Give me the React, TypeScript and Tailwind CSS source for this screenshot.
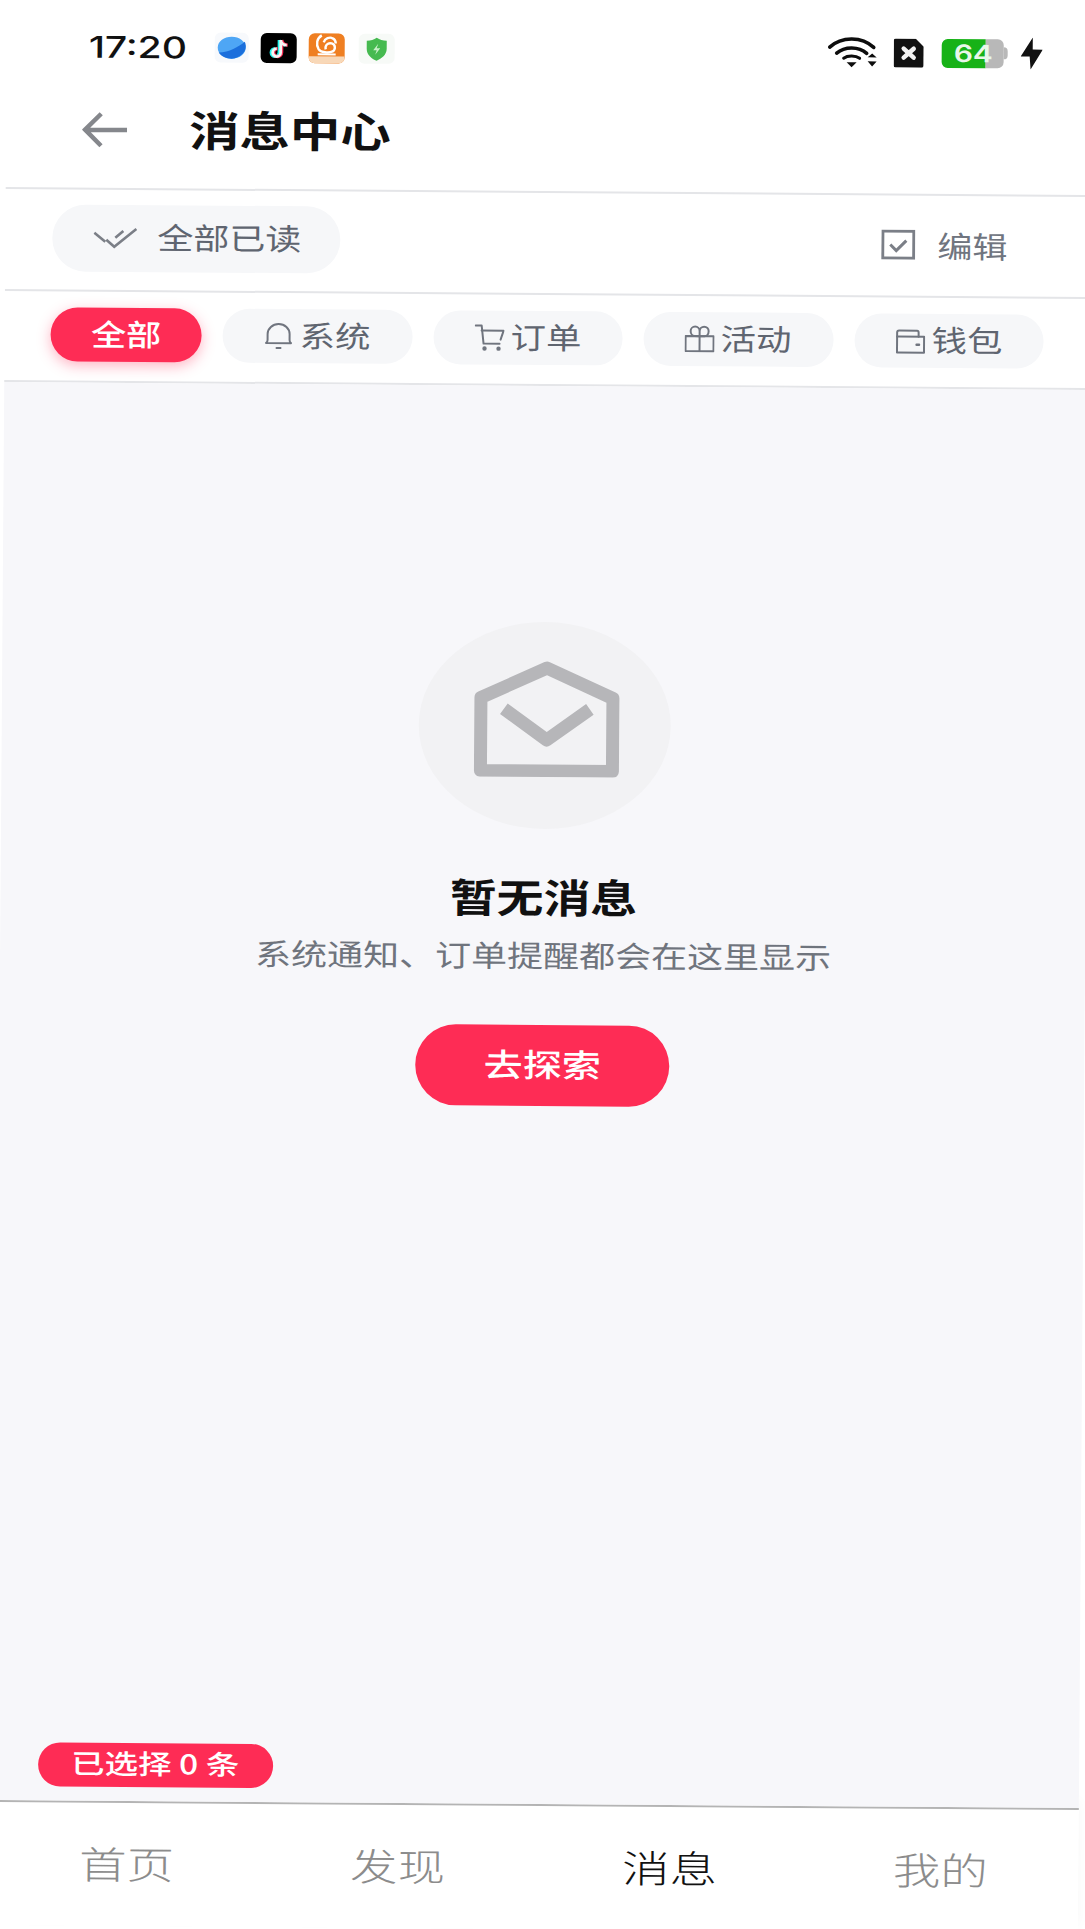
import React from 'react';

const tabs = [
  { key: 'system', label: '系统', icon: 'bell' },
  { key: 'order', label: '订单', icon: 'cart' },
  { key: 'event', label: '活动', icon: 'gift' },
  { key: 'wallet', label: '钱包', icon: 'wallet' },
];

const navItems = [
  { label: '首页', active: false },
  { label: '发现', active: false },
  { label: '消息', active: true },
  { label: '我的', active: false },
];

const TabIcon: React.FC<{ name: string }> = ({ name }) => {
  return (
    <svg width="30" height="28" viewBox="0 0 30 28" fill="none" stroke="#70757f" strokeWidth="2" strokeLinejoin="round" strokeLinecap="round">
      {name === 'bell' && (
        <>
          <path d="M2.500 21c1-.5 1.500-1.500 1.500-3v-6a11 10 0 0 1 22 0v6c0 1.500.5 2.500 1.500 3z" />
          <path d="M13 26h4" />
        </>
      )}
      {name === 'cart' && (
        <>
          <path d="M1 2h6l2 18h16" />
          <path d="M7 7h22l-3 9" />
          <circle cx="10" cy="25" r="1.200" fill="#70757f" />
          <circle cx="24" cy="25" r="1.200" fill="#70757f" />
        </>
      )}
      {name === 'gift' && (
        <>
          <path d="M1 11h28v15H1zM15 11v15" />
          <path d="M15 11V6a4.500 4.500 0 0 0-9 0c0 3 2 5 4 5zM15 11V6a4.500 4.500 0 0 1 9 0c0 3-2 5-4 5z" />
        </>
      )}
      {name === 'wallet' && (
        <>
          <path d="M1.500 10v16h27V10z" />
          <path d="M1.500 10V6c0-1 1-2 2-2h18c1 0 1.500 1 1.500 2v4" />
          <path d="M21 18h2.500" strokeWidth="2.400" />
        </>
      )}
    </svg>
  );
};

const StatusBar = () => (
  <div className="h-[100px] pl-[82px] pr-[49px] flex items-center">
    <span className="block w-[98px] font-['Inter'] text-[30px] font-medium text-[#111] origin-left scale-x-[1.3]">17:20</span>
    <div className="ml-[28px] flex items-center">
      {/* blue planet */}
      <svg width="34" height="30" viewBox="0 0 34 30" className="rounded-md bg-[#f7f9fc]">
        <ellipse cx="17" cy="15" rx="14" ry="11" fill="#4ea6f5" />
        <path d="M4 20C14 20 24 14 30 9c2 4 1 9-2 12-3 3-7 5-11 5-5 0-10-2-13-6z" fill="#1b6fdc" />
      </svg>
      {/* tiktok */}
      <div className="ml-[12px] w-[36px] h-[30px] rounded-[6px] bg-black flex items-center justify-center">
        <svg width="24" height="24" viewBox="0 0 24 24" fill="none">
          <path d="M13 3v12.500a4 4 0 1 1-4-4M13 3c.4 3 2.600 5 6 5" stroke="#25f4ee" strokeWidth="3.200" transform="translate(-0.500 1)" />
          <path d="M13 3v12.500a4 4 0 1 1-4-4M13 3c.4 3 2.600 5 6 5" stroke="#fe2c55" strokeWidth="3.200" transform="translate(2 1)" />
          <path d="M13 3v12.500a4 4 0 1 1-4-4M13 3c.4 3 2.600 5 6 5" stroke="#f5f5f5" strokeWidth="2.800" transform="translate(1 1)" />
        </svg>
      </div>
      {/* orange squirrel */}
      <div className="ml-[12px] w-[36px] h-[30px] rounded-[6px] bg-[#ef7f22] flex flex-col items-center overflow-hidden">
        <svg width="30" height="23" viewBox="0 0 30 23" fill="none" stroke="#fff" strokeWidth="2.400">
          <path d="M10 2c-5 3-6 9-3 14 2 3 10 4 14 2 3-2 3-7-1-8-4-1-7 2-6 6" />
          <path d="M12 9c1-4 6-6 9-4 2 1 3 3 3 5" />
          <path d="M6 21h18" strokeWidth="2" />
        </svg>
        <div className="w-full flex-1 bg-[#f8d8b8]" />
      </div>
      {/* green shield */}
      <svg width="36" height="30" viewBox="0 0 36 30" className="ml-[14px] rounded-md bg-[#f7faf7]">
        <path d="M18 4c3 2 6 3 10 3v8c0 6-5 10-10 12C13 25 8 21 8 15V7c4 0 7-1 10-3z" fill="#46ba50" />
        <path d="M19.500 10l-5 6.500h3.500l-1.500 4.500 5-6.500H18z" fill="#c9f0c9" />
      </svg>
    </div>
    <div className="ml-auto flex items-center">
      {/* wifi */}
      <svg width="50" height="32" viewBox="0 0 50 32" fill="none" stroke="#0d0d0d" strokeLinecap="round">
        <path d="M2 11c12-11 32-11 44 0" strokeWidth="3.600" />
        <path d="M9 17c8-7 22-7 30 0" strokeWidth="3.600" />
        <path d="M16 22c4-3 12-3 16 0" strokeWidth="3" />
        <path d="M19 26h10l-5 5z" fill="#0d0d0d" stroke="none" />
        <path d="M40 21h9l-4.500-4zM40 25h9l-4.500 5z" fill="#0d0d0d" stroke="none" />
      </svg>
      {/* sim */}
      <svg width="30" height="29" viewBox="0 0 30 29" className="ml-[16px]">
        <path d="M2 0h20l8 8v19a2 2 0 0 1-2 2H2a2 2 0 0 1-2-2V2a2 2 0 0 1 2-2z" fill="#111" />
        <path d="M10 10l10 9M20 10l-10 9" stroke="#f2f2f2" strokeWidth="4.500" strokeLinecap="round" />
      </svg>
      {/* battery */}
      <div className="ml-[18px] relative w-[66px] h-[29px] flex">
        <div className="w-[44px] h-full rounded-l-[6px] bg-[#17b217]" />
        <div className="w-[18px] h-full rounded-r-[6px] bg-[#b8b8b8]" />
        <div className="w-[4px] h-[12px] self-center rounded-r-sm bg-[#b8b8b8]" />
        <span className="absolute left-[12px] top-0 leading-[29px] font-['Inter'] text-[24px] font-semibold text-[#e9f7e9] origin-left scale-x-[1.25]">64</span>
      </div>
      {/* bolt */}
      <svg width="22" height="32" viewBox="0 0 22 32" className="ml-[13px]">
        <path d="M12 0L0 19h9l1 13L22 12H12z" fill="#111" />
      </svg>
    </div>
  </div>
);

export default function App() {
  return (
    <div className="w-[1085px] h-[1929px] overflow-hidden bg-white font-['Noto_Sans_CJK_SC','Noto_Sans',sans-serif]">
      <div className="w-full h-full flex flex-col rotate-[0.42deg] bg-white">
        <div className="border-b-2 border-[#e4e5e8]">
          <StatusBar />
          <div className="h-[91px] pb-[27px] pl-[76px] flex items-center">
            <svg width="45" height="36" viewBox="0 0 45 36" fill="none" stroke="#85878c" strokeWidth="4.500" className="mt-[2px]">
              <path d="M45 18H4M19 2L3 18l16 16" />
            </svg>
            <h1 className="ml-[62px] mb-[2px] block w-[199px] whitespace-nowrap text-[42px] leading-[56px] font-semibold text-[#111] origin-left scale-x-[1.2]">消息中心</h1>
          </div>
        </div>

        <div className="h-[102px] pb-[4px] pl-[47px] pr-[84px] flex items-center justify-between border-b-2 border-[#e4e5e8]">
          <button className="w-[288px] h-[67px] rounded-full bg-[#f6f7f9] flex items-center pl-[41px]">
            <svg width="46" height="24" viewBox="0 0 46 24" fill="none" stroke="#7b7f87" strokeWidth="2.600">
              <path d="M1 7l11 9M13 14l8 7L43 3M22 12l8-7" />
            </svg>
            <span className="ml-[18px] pb-[5px] block w-[143px] whitespace-nowrap text-left text-[30px] leading-[36px] text-[#5f6570] origin-left scale-x-[1.2]">全部已读</span>
          </button>
          <div className="flex items-center mt-[2px] ml-[2px]">
            <svg width="34" height="30" viewBox="0 0 34 30" fill="none" stroke="#7b7f87" strokeWidth="3" className="mr-[-1px]">
              <rect x="1.500" y="1.500" width="31" height="27" />
              <path d="M9 15l6 6 10-10" />
            </svg>
            <span className="ml-[23px] block w-[69px] whitespace-nowrap text-[30px] leading-[40px] text-[#70757f] origin-left scale-x-[1.17]">编辑</span>
          </div>
        </div>

        <div className="h-[91px] pb-[4px] pl-[46px] flex items-center gap-[21px] border-b-2 border-[#e4e5e8]">
          <button className="w-[151px] h-[54px] rounded-full bg-[#fe2c55] shadow-[0_4px_14px_rgba(254,44,85,0.35)] text-[30px] leading-[50px] font-medium text-white">
            <span className="block pb-[3px] scale-x-[1.17]">全部</span>
          </button>
          {tabs.map((tab) => (
            <button key={tab.key} className="w-[189.5px] h-[54px] rounded-full bg-[#f6f7f9] flex items-center justify-center gap-[6px]">
              <TabIcon name={tab.icon} />
              <span className="block pb-[4px] w-[71px] whitespace-nowrap text-left text-[30px] leading-[46px] text-[#5f6570] origin-left scale-x-[1.18]">{tab.label}</span>
            </button>
          ))}
        </div>

        <main className="relative flex-1 bg-[#f7f7fa] flex flex-col items-center pt-[236px]">
          <div className="w-[252px] h-[207px] rounded-[50%] bg-[#f2f2f4] flex items-center justify-center pb-[13px] pl-[4px]">
            <svg width="146" height="116" viewBox="0 0 146 116" fill="none" stroke="#b6b6b9" strokeWidth="13" strokeLinejoin="round">
              <path d="M7 110V37L73 7 139 37v73z" />
              <path d="M30 48l43 31 43-31" />
            </svg>
          </div>
          <h2 className="mt-[39px] text-[40px] leading-[56px] font-semibold text-[#111] scale-x-[1.17]">暂无消息</h2>
          <p className="mt-[9px] text-[30px] leading-[42px] text-[#6f747d] scale-x-[1.2]">系统通知、订单提醒都会在这里显示</p>
          <button className="mt-[50px] w-[254px] h-[81px] rounded-full bg-[#fe2c55] text-white">
            <span className="block pb-[5px] text-[32px] leading-[76px] font-medium scale-x-[1.22]">去探索</span>
          </button>

          <div className="absolute left-[44px] bottom-[14px] w-[235px] h-[44px] rounded-full bg-[#fe2c55] pl-[33px] flex items-center">
            <span className="block pb-[5px] w-[166px] whitespace-nowrap text-[27px] leading-[36px] font-medium text-white origin-left scale-x-[1.24]">已选择 0 条</span>
          </div>
        </main>

        <nav className="h-[125px] pb-[4px] grid grid-cols-4 items-center bg-white border-t-2 border-[#b4b4b4] shadow-[0_-8px_14px_rgba(0,0,0,0.035)]">
          {navItems.map((item) => (
            <div key={item.label} className={`pr-[4px] text-center text-[38px] leading-[50px] font-light scale-x-[1.25] ${item.active ? 'text-[#111]' : 'text-[#8c8c8c]'}`}>
              {item.label}
            </div>
          ))}
        </nav>
      </div>
    </div>
  );
}
